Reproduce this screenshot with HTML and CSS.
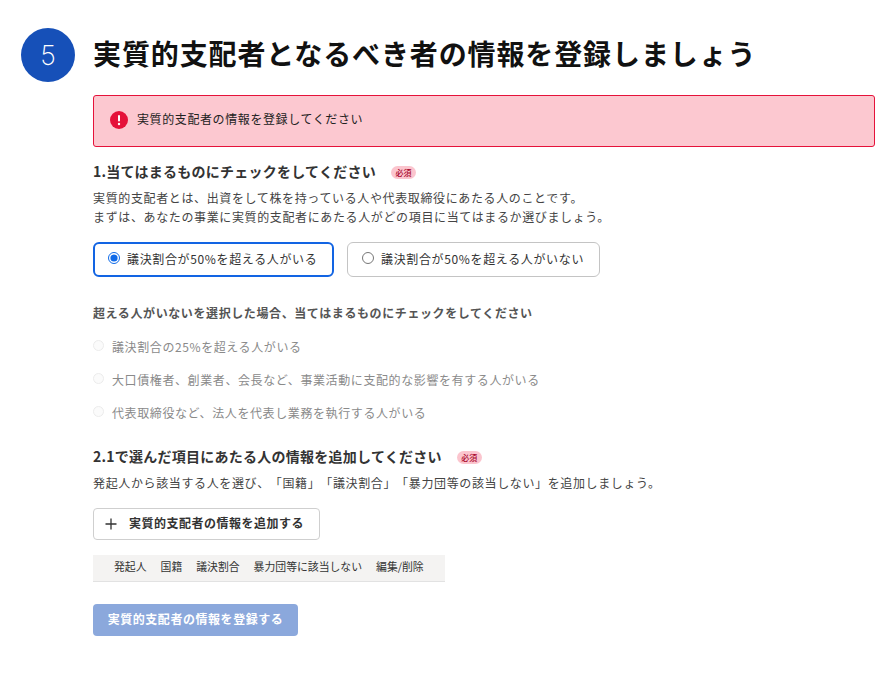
FILE: index.html
```html
<!DOCTYPE html>
<html lang="ja">
<head>
<meta charset="utf-8">
<title>実質的支配者</title>
<link rel="stylesheet" href="styles.css">
</head>
<body>
<div class="page">
  <header class="head">
    <div class="step">5</div>
    <h1>実質的支配者となるべき者の情報を登録しましょう</h1>
  </header>
  <main class="content">
    <div class="alert">
      <svg class="alert-icon" viewBox="0 0 18 18" width="18" height="18"><circle cx="9" cy="9" r="9" fill="#e5123a"/><rect x="8" y="4" width="2" height="6.6" rx="1" fill="#fff"/><circle cx="9" cy="13" r="1.2" fill="#fff"/></svg>
      <span>実質的支配者の情報を登録してください</span>
    </div>

    <div class="sec-title sec-one"><h2>1.当てはまるものにチェックをしてください</h2><span class="req">必須</span></div>
    <p class="desc">実質的支配者とは、出資をして株を持っている人や代表取締役にあたる人のことです。<br>まずは、あなたの事業に実質的支配者にあたる人がどの項目に当てはまるか選びましょう。</p>

    <div class="choices">
      <label class="choice on"><input type="radio" name="a" checked><span>議決割合が50%を超える人がいる</span></label>
      <label class="choice off"><input type="radio" name="a"><span>議決割合が50%を超える人がいない</span></label>
    </div>

    <h3 class="sub">超える人がいないを選択した場合、当てはまるものにチェックをしてください</h3>
    <div class="dis-list">
      <div class="dis"><i class="dot"></i><span>議決割合の25%を超える人がいる</span></div>
      <div class="dis"><i class="dot"></i><span>大口債権者、創業者、会長など、事業活動に支配的な影響を有する人がいる</span></div>
      <div class="dis"><i class="dot"></i><span>代表取締役など、法人を代表し業務を執行する人がいる</span></div>
    </div>

    <div class="sec-title sec-two"><h2>2.1で選んだ項目にあたる人の情報を追加してください</h2><span class="req">必須</span></div>
    <p class="desc desc-two">発起人から該当する人を選び、「国籍」「議決割合」「暴力団等の該当しない」を追加しましょう。</p>

    <button class="add" type="button">
      <svg viewBox="0 0 12 12" width="12" height="12"><path d="M6 0.5v11M0.5 6h11" stroke="#333" stroke-width="1.3" fill="none"/></svg>
      <span>実質的支配者の情報を追加する</span>
    </button>

    <div class="thead">
      <span>発起人</span><span>国籍</span><span>議決割合</span><span>暴力団等に該当しない</span><span>編集/削除</span>
    </div>

    <button class="submit" type="button">実質的支配者の情報を登録する</button>
  </main>
</div>
</body>
</html>
```

FILE: styles.css
```css
* { box-sizing: border-box; }
html, body { margin: 0; background: #fff; }
body {
  font-family: "Noto Sans CJK JP", "Noto Sans", sans-serif;
  color: #333;
  text-spacing-trim: space-all;
}
.page { padding: 28px 18px 0 21px; height: 685px; overflow: hidden; }
.head { display: flex; align-items: center; gap: 18px; }
.step {
  width: 54px; height: 54px; border-radius: 50%;
  background: #1650b8; color: #fff;
  display: flex; align-items: center; justify-content: center;
  font: 200 27px/1 "Inter", "Liberation Sans", sans-serif;
}
h1 { margin: 0 0 5px; font-size: 28px; line-height: 36px; font-weight: 700; letter-spacing: .88px; color: #111; white-space: nowrap; }
.content { margin: 13px 0 0 72px; }
.alert {
  height: 52px; border: 1px solid #e5123a; border-radius: 3px; background: #fcc8d0;
  display: flex; align-items: flex-start; gap: 9px; padding: 15px 16px; font-size: 12px; line-height: 16px; letter-spacing: .6px; color: #222;
}
.alert-icon { flex: none; }
.sec-title { display: flex; align-items: center; gap: 15px; }
.sec-one { margin-top: 14px; }
.sec-two { margin-top: 24px; }
h2 { margin: 0; font-size: 14px; line-height: 20px; font-weight: 700; letter-spacing: .25px; color: #333; }
.req {
  position: relative; top: 1px;
  font-size: 8px; line-height: 13px; padding: 0 4.5px; border-radius: 7px; background: #fbc5ce; color: #a8062c; font-weight: 500;
}
.desc { margin: 7px 0 0; font-size: 12px; line-height: 19px; letter-spacing: .63px; color: #444; }
.desc-two { margin-top: 7px; }
.choices { display: flex; gap: 13px; margin-top: 16px; }
.choice {
  height: 35px; display: flex; align-items: center; gap: 7px; background: #fff;
  font-size: 12px; letter-spacing: .65px; color: #333;
}
.choice input { margin: 0; width: 12px; height: 12px; position: relative; top: -2px; accent-color: #0f6ae8; }
.choice span { position: relative; top: -1px; }
.choice.on { width: 241px; border: 2px solid #1264e3; border-radius: 6px; padding-left: 13px; }
.choice.off { width: 253px; border: 1px solid #c4c4c4; border-radius: 6px; padding-left: 14px; }
.sub { margin: 26px 0 0; font-size: 12px; line-height: 20px; font-weight: 700; letter-spacing: .6px; color: #555; }
.dis-list { margin-top: 13px; display: flex; flex-direction: column; gap: 13px; }
.dis { height: 20px; display: flex; align-items: center; gap: 8px; font-size: 12px; letter-spacing: .6px; color: #8a8a8a; }
.dot { width: 11px; height: 11px; border-radius: 50%; border: 1px solid #ececec; background: #fbfbfb; position: relative; top: -1px; flex: none; }
.add {
  margin-top: 16px; width: 227px; height: 32px; display: flex; align-items: center; gap: 12px; padding: 0 0 0 11px;
  background: #fff; border: 1px solid #cfcfcf; border-radius: 4px;
  font: 700 12px/1 "Noto Sans CJK JP", sans-serif; letter-spacing: .5px; color: #333;
}
.add span { position: relative; top: -1px; }
.thead {
  margin-top: 15px; width: 352px; height: 27px; background: #f4f3f2; border-bottom: 1px solid #e2e2e2;
  display: flex; align-items: center; gap: 14px; padding: 0 0 4px 21px; font-size: 10.85px; color: #333; white-space: nowrap;
}
.submit {
  display: block; margin-top: 22px; width: 205px; height: 32px; border: 0; border-radius: 4px; background: #8ba8dc; color: #fff; padding: 0 0 2px;
  font: 700 12px/1 "Noto Sans CJK JP", sans-serif; letter-spacing: .55px;
}
```
